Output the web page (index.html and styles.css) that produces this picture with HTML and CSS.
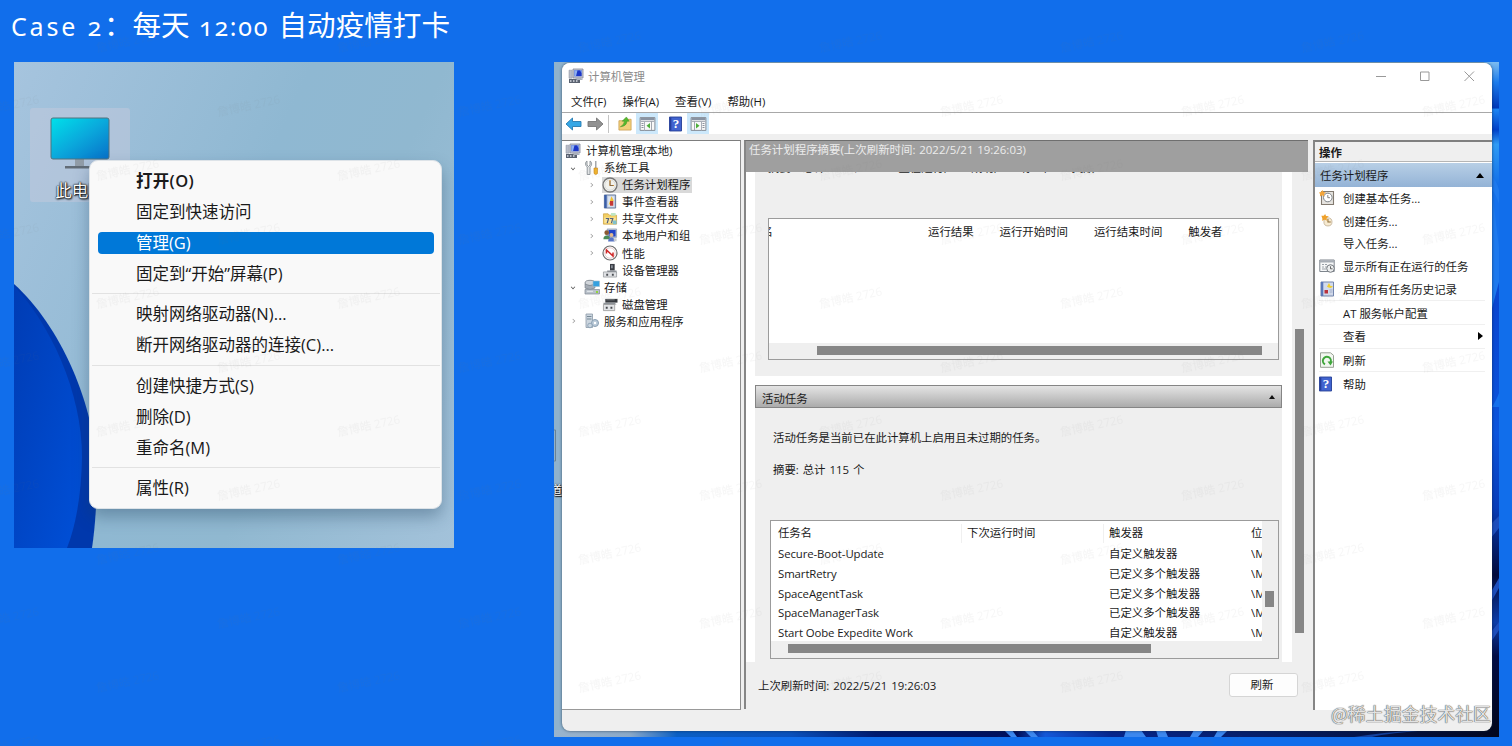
FILE: index.html
```html
<!DOCTYPE html>
<html lang="zh-CN">
<head>
    <meta charset="UTF-8">
    <title>Case 2</title>
    <link rel="stylesheet" href="styles.css">
</head>
<body>
    <!-- Icon definitions -->
    <svg class="defs" width="0" height="0">
        <defs>
            <linearGradient id="screen" x1="0" y1="0" x2="1" y2="1">
                <stop offset="0" stop-color="#00e1ea"/>
                <stop offset="0.5" stop-color="#0aa9dc"/>
                <stop offset="1" stop-color="#0870c8"/>
            </linearGradient>
            <linearGradient id="bloom" x1="0" y1="0" x2="1" y2="1">
                <stop offset="0" stop-color="#003cb4"/>
                <stop offset="1" stop-color="#0050d8"/>
            </linearGradient>
            <linearGradient id="bottomStrip">
                <stop offset="0" stop-color="#9ab4cd"/>
                <stop offset="0.08" stop-color="#8ba9c8"/>
                <stop offset="0.13" stop-color="#0b5fc4"/>
                <stop offset="0.25" stop-color="#0a50bb"/>
                <stop offset="0.34" stop-color="#001a70"/>
                <stop offset="0.49" stop-color="#000f5c"/>
                <stop offset="0.52" stop-color="#1458d8"/>
                <stop offset="0.59" stop-color="#06258c"/>
                <stop offset="0.75" stop-color="#061e68"/>
                <stop offset="1" stop-color="#02061f"/>
            </linearGradient>
            <linearGradient id="rightStrip" x1="0" y1="0" x2="0" y2="1">
                <stop offset="0" stop-color="#7dbcf0"/>
                <stop offset="0.03" stop-color="#1c7cec"/>
                <stop offset="0.068" stop-color="#0038b8"/>
                <stop offset="0.07" stop-color="#1c86f4"/>
                <stop offset="0.1" stop-color="#0040c8"/>
                <stop offset="0.122" stop-color="#2f9bf5"/>
                <stop offset="0.2" stop-color="#0a62e4"/>
                <stop offset="0.36" stop-color="#0a46d0"/>
                <stop offset="0.55" stop-color="#0b54dc"/>
                <stop offset="0.66" stop-color="#083cb8"/>
                <stop offset="0.76" stop-color="#020a3c"/>
                <stop offset="0.83" stop-color="#0d3da8"/>
                <stop offset="0.88" stop-color="#020c44"/>
                <stop offset="1" stop-color="#020618"/>
            </linearGradient>
        </defs>
        <symbol id="i-computer" viewBox="0 0 16 16">
            <path d="M5 1h10v9H5z" fill="#c9ccd6" stroke="#80859a" stroke-width=".8"/>
            <path d="M6.300 2.200h7.400v6H6.300z" fill="#1b36c8"/>
            <path d="M6.300 2.200h3.200l-1.500 6H6.300zM12 2.200h1.700v3z" fill="#8fb0f0"/>
            <path d="M1 2.200h3.200v8H1z" fill="#b9bdc9" stroke="#878c9b" stroke-width=".5"/>
            <path d="M1 11h11v4H1z" fill="#5a6270"/>
            <path d="M2 12.300h1.500v1.500H2zM5 12.300h1.500v1.500H5zM8 12.300h1.500v1.500H8z" fill="#d7dbe3"/>
            <path d="M7 10h6l2 2h-6z" fill="#aab0bd"/>
        </symbol>
        <symbol id="i-tools" viewBox="0 0 16 16">
            <path d="M3 1v4l1.500 1.500L6 5V1c2 1 2.300 4.500 0 6v7.500H3.200V7C1 5.500 1 2.200 3 1z" fill="#e2e4e6" stroke="#7e858c" stroke-width=".8"/>
            <path d="M11 1h1.500v7H11z" fill="#a4a7ab"/>
            <path d="M10 8h3.500v5.500q-1.700 2-3.500 0z" fill="#f2b52c" stroke="#c9851a" stroke-width=".6"/>
        </symbol>
        <symbol id="i-clock" viewBox="0 0 16 16">
            <circle cx="8" cy="8" r="7" fill="#f1f1ec" stroke="#777" stroke-width="1.300"/>
            <circle cx="8" cy="8" r="5.200" fill="none" stroke="#cfcfcf" stroke-width=".6"/>
            <path d="M8 3v5.500h4" fill="none" stroke="#d89035" stroke-width="1.200"/>
            <path d="M8 4v4.500h3" fill="none" stroke="#555" stroke-width=".6"/>
        </symbol>
        <symbol id="i-event" viewBox="0 0 16 16">
            <path d="M2 1h12v14H2z" fill="#b8c6de" stroke="#5d6f93" stroke-width=".9"/>
            <path d="M2 1h2.500v14H2z" fill="#3a5ea8"/>
            <path d="M6 2.500h6.500v11H6z" fill="#dde5f1"/>
            <path d="M6.500 12l3-9.500L12 7z" fill="#f0bf31"/>
            <path d="M8 7.500h3.500v5H8z" fill="#c53a36"/>
        </symbol>
        <symbol id="i-share" viewBox="0 0 16 16">
            <path d="M1 3h5l1.500 1.500H15V14H1z" fill="#f3cf63" stroke="#c79a35" stroke-width=".7"/>
            <path d="M9 2h5v3H9z" fill="#bfe6c5"/>
            <path d="M2 7h12v6H2z" fill="#f9e39a"/>
            <path d="M3.500 8h3l-1.500 5M8 8h3l-1.500 5" fill="none" stroke="#55617a" stroke-width="1.300"/>
            <path d="M11 10h4v4h-4z" fill="#7fc1ce"/>
        </symbol>
        <symbol id="i-users" viewBox="0 0 16 16">
            <path d="M5 1h10v9H5z" fill="#b9c6dd" stroke="#8692a8" stroke-width=".7"/>
            <path d="M6.500 2h7.500v7H6.500z" fill="#2345c7"/>
            <circle cx="4.500" cy="5" r="2.500" fill="#8b5a33"/>
            <path d="M1 12q0-4 3.500-4T8 12z" fill="#4a8c58"/>
            <circle cx="9.500" cy="7.500" r="2.200" fill="#e3ba8e"/>
            <path d="M6 14.500q0-4.500 3.500-4.500t3.500 4.500z" fill="#5975c4"/>
            <path d="M12 11h3v3h-3z" fill="#c8ccd2"/>
        </symbol>
        <symbol id="i-perf" viewBox="0 0 16 16">
            <circle cx="8" cy="8" r="7" fill="#fff" stroke="#6e6e6e" stroke-width="1.200"/>
            <circle cx="8" cy="8" r="5.200" fill="#fff" stroke="#d5a0a0" stroke-width=".5"/>
            <path d="M4.500 8.500V5l6.500 6V7.500" fill="none" stroke="#d02828" stroke-width="1.500"/>
        </symbol>
        <symbol id="i-device" viewBox="0 0 16 16">
            <path d="M8 1h5v7H8z" fill="#3b3f46"/>
            <path d="M9.300 2.500h1.500v3H9.300z" fill="#9aa2ac"/>
            <path d="M5 8h10v3H5z" fill="#8c9198"/>
            <path d="M1 9.500h14V15H1z" fill="#dfe1e4" stroke="#8a8d91" stroke-width=".7"/>
            <path d="M4 11.500h2v2H4zM10 11.500h2v2h-2z" fill="#4b4e53"/>
        </symbol>
        <symbol id="i-storage" viewBox="0 0 16 16">
            <ellipse cx="6" cy="4" rx="5" ry="2.700" fill="#d2d6db" stroke="#767d86" stroke-width=".8"/>
            <path d="M1 5v4q5 3 10 0V5q-5 3-10 0z" fill="#a5acb5" stroke="#767d86" stroke-width=".6"/>
            <path d="M9 2h6.500v5.500H9z" fill="#35a0df" stroke="#9dbacb" stroke-width=".6"/>
            <path d="M1 10.500h14.500V15H1z" fill="#b9c1ca" stroke="#7f8893" stroke-width=".7"/>
            <path d="M3 12.300h6" stroke="#e7ebef"/>
            <path d="M12 12h2v2h-2z" fill="#8fd43d"/>
        </symbol>
        <symbol id="i-disk" viewBox="0 0 16 16">
            <path d="M3 2h13v4H3z" fill="#35383d"/>
            <path d="M4 3h9" stroke="#90959b" stroke-width=".8"/>
            <path d="M1 6h12l2 2H1z" fill="#8e9399"/>
            <path d="M1 8h12v6.500H1z" fill="#e2e4e7" stroke="#888" stroke-width=".7"/>
            <path d="M3.500 10.500h2v2h-2zM8.500 10.500h2v2h-2z" fill="#44474c"/>
        </symbol>
        <symbol id="i-services" viewBox="0 0 16 16">
            <path d="M2 1h6.500v13.500H2z" fill="#ccd6df" stroke="#8d9ba7" stroke-width=".8"/>
            <path d="M3 3.500h4.500M3 6h4.500" stroke="#778996" stroke-width="1"/>
            <circle cx="11" cy="10" r="3.500" fill="#b9c9d8" stroke="#8ba0b3" stroke-width="1"/>
            <circle cx="11" cy="10" r="1.200" fill="#fff"/>
            <circle cx="6" cy="12.500" r="2.300" fill="#c8d4df" stroke="#8ba0b3" stroke-width=".9"/>
        </symbol>
        <symbol id="i-back" viewBox="0 0 16 16">
            <path d="M.5 8L7 2v3.500h8.500v5H7V14z" fill="#35a7e6" stroke="#277bb0" stroke-width=".9"/>
        </symbol>
        <symbol id="i-forward" viewBox="0 0 16 16">
            <path d="M15.500 8L9 2v3.500H.5v5H9V14z" fill="#919191" stroke="#777" stroke-width=".9"/>
        </symbol>
        <symbol id="i-up" viewBox="0 0 16 16">
            <path d="M1.500 5h5l1-1.500h7V15h-13z" fill="#f2d17c" stroke="#c99b4a" stroke-width=".8"/>
            <path d="M3 11.500Q7 9.500 7.500 5.500L5 5.500 9.500 1l3 4.500-2.300 0Q9.500 11 3 11.500z" fill="#54b92e" stroke="#3d8f22" stroke-width=".5"/>
        </symbol>
        <symbol id="i-pane-left" viewBox="0 0 16 14">
            <path d="M.6.6h14.800v12.800H.6z" fill="#f8f8f8" stroke="#868d97" stroke-width="1"/>
            <path d="M1 1h14v2.200H1z" fill="#8993a2"/>
            <path d="M1 4.500h14M5 4.500v9" stroke="#a9afb8"/>
            <path d="M2 6.500h2M2 8.500h2M2 10.500h2" stroke="#8a919c"/>
            <path d="M10.500 6v5.500L7 8.800z" fill="#4dae39"/>
            <path d="M12 4.500v9" stroke="#8b929c" stroke-width=".8"/>
        </symbol>
        <symbol id="i-pane-right" viewBox="0 0 16 14">
            <path d="M.6.6h14.800v12.800H.6z" fill="#f8f8f8" stroke="#868d97" stroke-width="1"/>
            <path d="M1 1h14v2.200H1z" fill="#8993a2"/>
            <path d="M1 4.500h14M11 4.500v9" stroke="#a9afb8"/>
            <path d="M12 6.500h2M12 8.500h2M12 10.500h2" stroke="#8a919c"/>
            <path d="M5.500 6v5.500L9 8.800z" fill="#4dae39"/>
            <path d="M4 4.500v9" stroke="#8b929c" stroke-width=".8"/>
        </symbol>
        <symbol id="i-book" viewBox="0 0 14 16">
            <path d="M.5.500h13v15H.500z" fill="#4163cf" stroke="#253f96"/>
            <path d="M1 1h1.500v14H1z" fill="#243d9c"/>
        </symbol>
        <symbol id="i-task-basic" viewBox="0 0 16 16">
            <path d="M2.500 1.500h12v13h-12z" fill="#e5e3df" stroke="#827a70" stroke-width="1.100"/>
            <circle cx="8.800" cy="7.500" r="4.300" fill="#fff" stroke="#7e8388"/>
            <path d="M8.800 5v2.700h2.200" fill="none" stroke="#777" stroke-width=".9"/>
            <path d="M0 2.500l2-.5L3.500 0 4.500 2 7 2.500 5 4l.3 2.500L3 5.300 1 6.500V4z" fill="#f3a53a"/>
        </symbol>
        <symbol id="i-task" viewBox="0 0 16 16">
            <circle cx="9" cy="9.500" r="4.300" fill="#f7ead0" stroke="#c7b89f"/>
            <path d="M9 6.500v3.200h3" fill="none" stroke="#8b6b35" stroke-width="1.100"/>
            <path d="M2 3l2.500 0L6 1l1 2.200L10 3.500 7.500 5.500l.4 2.700-2.400-1.200L3 8.500V5.500z" fill="#efa12b"/>
        </symbol>
        <symbol id="i-running" viewBox="0 0 16 16">
            <path d="M.8 2h14.400v11.500H.8z" fill="#f6f7f8" stroke="#7e858d"/>
            <path d="M1 2.300h14v2.200H1z" fill="#a7adb5"/>
            <path d="M3 6.500h2M3 9h2M6 6.500h2M6 9h2M3 11h4" stroke="#9aa1a8"/>
            <circle cx="11.500" cy="10.500" r="3.800" fill="#eceeef" stroke="#74797f"/>
            <path d="M11.500 8.300v2.500h2" fill="none" stroke="#555" stroke-width=".9"/>
        </symbol>
        <symbol id="i-history" viewBox="0 0 16 16">
            <path d="M2 1h12.500v14H2z" fill="#d3dbed" stroke="#7285ad"/>
            <path d="M2 1h2.300v14H2z" fill="#5b78ba"/>
            <path d="M10 2l1.500 3H14l-2 2-2.500-.5-1.500-.8z" fill="#f1ce2e"/>
            <path d="M5.500 9h3.500v3.500H5.500z" fill="#b9323c"/>
            <path d="M10.500 9h3M10.500 11h3" stroke="#9fabc6"/>
        </symbol>
        <symbol id="i-refresh" viewBox="0 0 16 16">
            <path d="M1.500.8h10l3 2.500v12h-13z" fill="#f2f7f0" stroke="#98a094"/>
            <path d="M6 12.300A4 4 0 1 1 11.500 10.500" fill="none" stroke="#3fa63b" stroke-width="2"/>
            <path d="M8.500 9.500h5.500L11.500 13.500z" fill="#3fa63b"/>
        </symbol>
    </svg>

    <h1 class="title"><span class="latin">Case 2</span>：每天 <span class="latin time">12:00</span> 自动疫情打卡</h1>

    <main class="shots">
        <section class="desktop">
            <svg class="wallpaper" width="440" height="486">
                <path d="M0 222C45 262 84 345 83 420Q82 460 78 486H0z" fill="#0038ac"/>
                <path d="M0 224C36 262 68 330 68 395Q67 450 53 486H0z" fill="url(#bloom)"/>
            </svg>
            <div class="pc-icon">
                <svg width="60" height="54" viewBox="0 0 60 54">
                    <path d="M25 42h9v8h-9z" fill="#929da8"/>
                    <path d="M15 49h30v2.500H15z" fill="#626c76"/>
                    <rect x="1" y="1" width="58" height="41" rx="2" fill="url(#screen)" stroke="#50737f"/>
                </svg>
                <span>此电脑</span>
            </div>
            <ul class="context-menu">
                <li class="default">打开(O)</li>
                <li>固定到快速访问</li>
                <li class="active">管理(G)</li>
                <li>固定到“开始”屏幕(P)</li>
                <li class="sep"></li>
                <li>映射网络驱动器(N)...</li>
                <li>断开网络驱动器的连接(C)...</li>
                <li class="sep"></li>
                <li>创建快捷方式(S)</li>
                <li>删除(D)</li>
                <li>重命名(M)</li>
                <li class="sep"></li>
                <li>属性(R)</li>
            </ul>
        </section>

        <section class="desktop-2">
            <svg class="wallpaper" width="945" height="675">
                <path d="M930 0h15v675h-15z" fill="url(#rightStrip)"/>
                <path d="M937 112Q944 122 945 128V220L937 250z" fill="#1d79ee"/>
                <path d="M945 185v-43q-3-10-7-14zM945 345h-7q5-8 7-14z" fill="#1470ec"/>
                <path d="M937 462l8-8v12l-8 10zM937 530l8-14v10l-8 14zM937 570l8-10v8l-8 12z" fill="#1e4ebc"/>
                <path d="M0 668h945v7H0z" fill="url(#bottomStrip)"/>
                <path d="M263 668h5l5 7h-5zM282 668h5l7 7h-7zM492 668h13l4 7h-20zM514 668h7l3 7h-8zM560 668h8l-5 7h-7zM582 668h8l-6 7h-6z" transform="translate(-58)" fill="#3c87ee" opacity="0"/>
                <path d="M450 668h8l5 7h-6zM470 668h8l6 7h-7zM572 668h15l5 7h-22zM602 668h9l3 7h-10zM640 668h10l-6 7h-8zM664 668h10l-7 7h-7z" fill="#3c87ee"/>
                <path d="M800 675q30-5 70-7h8q-45 3-60 7z" fill="#14409c"/>
                <path d="M-1 368h2.500v31H-1" fill="none" stroke="#6a8294"/>
            </svg>
            <span class="clipped-label">道</span>

            <div class="window">
                <header class="title-bar">
                    <svg width="16" height="16"><use href="#i-computer"/></svg>
                    <span>计算机管理</span>
                    <svg class="controls" width="102" height="12" viewBox="0 0 102 12">
                        <path d="M1 6.500h10M45.500 2h8.500v8.500h-8.500zM89.500 1.500l9.500 9.500M99 1.500l-9.500 9.500" fill="none" stroke="#999"/>
                    </svg>
                </header>
                <nav class="menu-bar">
                    <span>文件(F)</span><span>操作(A)</span><span>查看(V)</span><span>帮助(H)</span>
                </nav>
                <div class="toolbar">
                    <svg width="17" height="16"><use href="#i-back"/></svg>
                    <svg width="17" height="16"><use href="#i-forward"/></svg>
                    <i class="divider"></i>
                    <svg width="16" height="15"><use href="#i-up"/></svg>
                    <span class="pressed"><svg width="17" height="14"><use href="#i-pane-left"/></svg></span>
                    <span class="book"><svg width="13" height="16"><use href="#i-book"/></svg><b>?</b></span>
                    <span class="pressed last"><svg width="17" height="14"><use href="#i-pane-right"/></svg></span>
                </div>

                <div class="panes">
                    <ul class="tree">
                        <li class="l0"><svg width="16" height="16"><use href="#i-computer"/></svg><span>计算机管理(本地)</span></li>
                        <li class="l1"><i class="open"></i><svg width="16" height="16"><use href="#i-tools"/></svg><span>系统工具</span></li>
                        <li class="l2 selected"><i></i><p><svg width="16" height="16"><use href="#i-clock"/></svg><span>任务计划程序</span></p></li>
                        <li class="l2"><i></i><p><svg width="16" height="15"><use href="#i-event"/></svg><span>事件查看器</span></p></li>
                        <li class="l2"><i></i><p><svg width="16" height="15"><use href="#i-share"/></svg><span>共享文件夹</span></p></li>
                        <li class="l2"><i></i><p><svg width="16" height="15"><use href="#i-users"/></svg><span>本地用户和组</span></p></li>
                        <li class="l2"><i></i><p><svg width="16" height="16"><use href="#i-perf"/></svg><span>性能</span></p></li>
                        <li class="l2"><i class="none"></i><p><svg width="16" height="15"><use href="#i-device"/></svg><span>设备管理器</span></p></li>
                        <li class="l1"><i class="open"></i><svg width="16" height="16"><use href="#i-storage"/></svg><span>存储</span></li>
                        <li class="l2"><i class="none"></i><p><svg width="16" height="15"><use href="#i-disk"/></svg><span>磁盘管理</span></p></li>
                        <li class="l1"><i></i><svg width="16" height="16"><use href="#i-services"/></svg><span>服务和应用程序</span></li>
                    </ul>

                    <div class="summary">
                        <h2>任务计划程序摘要(上次刷新时间: 2022/5/21 19:26:03)</h2>
                        <div class="scroll-area">
                            <div class="groups">
                                <div class="group status">
                                    <div class="cut-line">摘要: 总计 0 个 - 0 正在运行, 0 成功, 0 停止, 0 失败</div>
                                    <div class="list list-run">
                                        <div class="row head">
                                            <span class="cut-name">名</span><span>运行结果</span><span>运行开始时间</span><span>运行结束时间</span><span>触发者</span>
                                        </div>
                                        <div class="hscroll"><i></i></div>
                                    </div>
                                </div>
                                <h3>活动任务<i></i></h3>
                                <div class="group tasks">
                                    <p>活动任务是当前已在此计算机上启用且未过期的任务。</p>
                                    <p>摘要: 总计 115 个</p>
                                    <div class="list list-tasks">
                                        <div class="rows">
                                            <div class="row head"><span>任务名</span><span>下次运行时间</span><span>触发器</span><span>位置</span></div>
                                            <div class="row"><span>Secure-Boot-Update</span><span></span><span>自定义触发器</span><span>\Microsoft</span></div>
                                            <div class="row"><span>SmartRetry</span><span></span><span>已定义多个触发器</span><span>\Microsoft</span></div>
                                            <div class="row"><span>SpaceAgentTask</span><span></span><span>已定义多个触发器</span><span>\Microsoft</span></div>
                                            <div class="row"><span>SpaceManagerTask</span><span></span><span>已定义多个触发器</span><span>\Microsoft</span></div>
                                            <div class="row"><span>Start Oobe Expedite Work</span><span></span><span>自定义触发器</span><span>\Microsoft</span></div>
                                        </div>
                                        <div class="vscroll"><i></i></div>
                                        <div class="hscroll"><i></i></div>
                                    </div>
                                </div>
                            </div>
                            <div class="main-scroll"><i></i></div>
                        </div>
                        <footer>
                            <span>上次刷新时间: 2022/5/21 19:26:03</span>
                            <button>刷新</button>
                        </footer>
                    </div>

                    <aside class="actions">
                        <h2>操作</h2>
                        <h3>任务计划程序<i></i></h3>
                        <ul>
                            <li><svg width="16" height="16"><use href="#i-task-basic"/></svg>创建基本任务...</li>
                            <li><svg width="15" height="15"><use href="#i-task"/></svg>创建任务...</li>
                            <li><svg width="16" height="16"></svg>导入任务...</li>
                            <li><svg width="16" height="16"><use href="#i-running"/></svg>显示所有正在运行的任务</li>
                            <li><svg width="16" height="16"><use href="#i-history"/></svg>启用所有任务历史记录</li>
                            <li class="line"><svg width="16" height="16"></svg>AT 服务帐户配置</li>
                            <li class="line"><svg width="16" height="16"></svg>查看<i class="more"></i></li>
                            <li class="line"><svg width="16" height="16"><use href="#i-refresh"/></svg>刷新</li>
                            <li class="line"><span class="book"><svg width="13" height="16"><use href="#i-book"/></svg><b>?</b></span>帮助</li>
                        </ul>
                    </aside>
                </div>
                <div class="status-bar"></div>
            </div>
        </section>
    </main>

    <!-- repeated user mark over the whole slide -->
    <svg class="mark" width="1512" height="746">
        <defs>
            <pattern id="tile" width="241" height="128" patternUnits="userSpaceOnUse" x="6" y="102">
                <g font-size="11.500" font-weight="500" fill="#777">
                    <text x="89" y="72" transform="rotate(-12 120 64)">詹博皓 2726</text>
                    <text x="-31" y="8" transform="rotate(-12)">詹博皓 2726</text>
                    <text x="210" y="8" transform="rotate(-12 241 0)">詹博皓 2726</text>
                    <text x="-31" y="136" transform="rotate(-12 0 128)">詹博皓 2726</text>
                    <text x="210" y="136" transform="rotate(-12 241 128)">詹博皓 2726</text>
                </g>
            </pattern>
        </defs>
        <rect width="1512" height="746" fill="url(#tile)"/>
    </svg>
    <div class="credit">@稀土掘金技术社区</div>
</body>
</html>
```

FILE: styles.css
```css
* {
    box-sizing: border-box;
    margin: 0;
    padding: 0;
}
body {
    width: 1512px;
    height: 746px;
    overflow: hidden;
    position: relative;
    background: #116eeb;
    font-family: "Open Sans", "Noto Sans CJK SC", sans-serif;
    font-size: 11.4px;
    color: #1a1a1a;
}
ul {
    list-style: none;
}
svg {
    display: block;
    flex: none;
}
.defs {
    position: absolute;
}
.title {
    height: 62px;
    padding-left: 11px;
    font-size: 28.6px;
    line-height: 49px;
    font-weight: 400;
    font-family: "Noto Sans", "Noto Sans CJK SC", sans-serif;
    color: #fff;
    white-space: pre;
}
.title .latin {
    font-size: 25px;
    letter-spacing: 2.8px;
    font-feature-settings: "onum";
}
.title .time {
    letter-spacing: 1.7px;
    margin: 0 2px 0 2px;
}
.shots {
    display: flex;
    align-items: flex-start;
    gap: 100px;
    padding-left: 14px;
}

/* left: desktop with context menu */
.desktop {
    position: relative;
    width: 440px;
    height: 486px;
    overflow: hidden;
    background: linear-gradient(115deg, #a6c4de 0%, #8fb8d2 45%, #90b8d0 65%, #a3c2da 100%);
}
.wallpaper {
    position: absolute;
    left: 0;
    top: 0;
}
.pc-icon {
    position: absolute;
    left: 16px;
    top: 46px;
    width: 100px;
    height: 94px;
    padding-top: 9px;
    border-radius: 3px;
    background: rgba(190, 200, 220, 0.6);
    display: flex;
    flex-direction: column;
    align-items: center;
}
.pc-icon span {
    margin-top: 8px;
    font-size: 16.5px;
    line-height: 24px;
    color: #fff;
    text-shadow: 0 0 2px #000, 1px 1px 2px #000, 0 0 1px #000;
}
.context-menu {
    position: absolute;
    left: 75px;
    top: 98px;
    width: 353px;
    height: 349px;
    padding: 6px 7px 0 8px;
    background: #f9f9f9;
    border: 1px solid #dde3e8;
    border-radius: 9px;
    box-shadow: 0 8px 16px rgba(30, 60, 90, 0.35);
    font-size: 16.5px;
}
.context-menu li {
    height: 30.9px;
    line-height: 28px;
    padding-left: 38px;
}
.context-menu .default {
    font-weight: 600;
    letter-spacing: 0.3px;
}
.context-menu .active {
    height: 22px;
    margin: 3.4px 0 5.5px;
    line-height: 22px;
    border-radius: 4px;
    background: #0078d8;
    color: #fff;
}
.context-menu .sep {
    height: 1px;
    margin: 2.5px -6px 6.200px;
    background: #e2e2e2;
}

/* right: computer management */
.desktop-2 {
    position: relative;
    width: 945px;
    height: 675px;
    padding: 1px 0 0 8px;
    overflow: hidden;
    background: #8fb2cc;
}
.clipped-label {
    position: absolute;
    left: -4px;
    top: 419px;
    font-size: 12px;
    color: #fff;
    text-shadow: 0 0 2px #000, 1px 1px 1px #000;
}
.window {
    position: relative;
    width: 930px;
    height: 668px;
    display: flex;
    flex-direction: column;
    overflow: hidden;
    border-radius: 8px;
    background: #efefef;
    box-shadow: 0 0 3px rgba(20, 40, 60, 0.7);
}
.title-bar {
    display: flex;
    align-items: center;
    height: 27px;
    padding: 0 15px 2px 6px;
    gap: 4px;
    background: #fff;
    color: #8b8b8b;
}
.controls {
    margin-left: auto;
}
.menu-bar {
    display: flex;
    gap: 16px;
    height: 23px;
    padding-left: 9px;
    line-height: 23px;
    background: #fff;
    border-bottom: 1px solid #a8a8a8;
}
.toolbar {
    display: flex;
    align-items: center;
    height: 21px;
    padding-left: 3px;
    background: #fff;
}
.toolbar > svg + svg {
    margin-left: 5px;
}
.divider {
    width: 1px;
    height: 18px;
    margin: 0 8px 0 4px;
    background: #c4c4c4;
}
.pressed {
    display: flex;
    align-items: center;
    justify-content: center;
    width: 22px;
    height: 21px;
    margin: 0 11px 0 3px;
    background: #cce8fb;
}
.pressed.last {
    margin: 0 0 0 5px;
}
.book {
    position: relative;
    width: 13px;
    height: 16px;
    flex: none;
}
.book b {
    position: absolute;
    left: 1px;
    right: 0;
    top: 0;
    text-align: center;
    font: bold 13px/16px "Liberation Serif", serif;
    color: #fff;
}
.panes {
    display: flex;
    height: 570px;
    margin-top: 6px;
}
.tree {
    width: 179px;
    height: 570px;
    padding: 1px 0 0 3px;
    background: #fff;
    border-top: 1px solid #7d7d7d;
    border-right: 1px solid #8c8c8c;
    border-bottom: 1px solid #999;
}
.tree li {
    display: flex;
    align-items: center;
    height: 17.080px;
    line-height: 17px;
    white-space: nowrap;
}
.tree li > svg + span {
    margin-left: 5px;
}
.tree .l1 {
    padding-left: 6px;
}
.tree .l1 > svg {
    margin-left: -1px;
}
.tree .l1 > svg + span {
    margin-left: 4px;
}
.tree .l2 {
    padding-left: 24px;
}
.tree i {
    width: 4px;
    height: 4px;
    margin: 0 10px 0 0;
    border: solid #a0a0a0;
    border-width: 1px 1px 0 0;
    transform: rotate(45deg) scale(0.8);
}
.tree i.open {
    border-color: #555;
    transform: rotate(135deg) scale(0.8);
}
.tree i.none {
    visibility: hidden;
}
.tree p {
    display: flex;
    align-items: center;
    height: 16px;
    gap: 4px;
    margin-left: -1px;
    padding: 0 2px 0 0;
}
.tree .selected p {
    background: #d9d9d9;
}

.summary {
    display: flex;
    flex-direction: column;
    width: 564px;
    height: 569px;
    margin-left: 3px;
    border-left: 2px solid #868686;
    border-top: 1px solid #6f6f6f;
}
.summary h2 {
    height: 31px;
    padding-left: 3px;
    background: #9f9f9f;
    color: #ececec;
    font-size: 11.45px;
    font-weight: normal;
    line-height: 18px;
    word-spacing: 0.8px;
}
.scroll-area {
    display: flex;
    height: 490px;
}
.groups {
    width: 546px;
    padding: 0 10px 0 9px;
    background: #fff;
}
.group {
    background: #efefef;
}
.status {
    height: 204px;
    padding: 0 3px 0 13px;
    overflow: hidden;
}
.cut-line {
    height: 47px;
    line-height: 16px;
    margin-top: -12px;
    margin-bottom: 11px;
    white-space: pre;
    word-spacing: 6px;
}
.list {
    border: 1px solid #9b9b9b;
    background: #fff;
    overflow: hidden;
}
.list-run {
    display: flex;
    flex-direction: column;
    height: 142px;
}
.list-run .row {
    display: flex;
    line-height: 25px;
    height: 124px;
}
.list-run .row span {
    height: 20px;
    margin-right: 19px;
    padding-right: 7px;
}
.list-run .row .cut-name {
    width: 4px;
    margin-right: 155px;
    padding: 0;
    overflow: hidden;
    direction: rtl;
}
.hscroll {
    height: 16px;
    padding: 3px 0 0 48px;
    background: #efefef;
}
.hscroll i {
    display: block;
    width: 445px;
    height: 9px;
    background: #868686;
}
.groups h3 {
    display: flex;
    align-items: center;
    justify-content: space-between;
    height: 23px;
    margin-top: 9px;
    padding: 3px 6px 0 6px;
    border: 1px solid #858585;
    background: linear-gradient(#e4e4e4, #ababab);
    font-size: 11.4px;
    font-weight: normal;
}
.groups h3 i {
    border: solid transparent;
    border-width: 0 3px 4px;
    border-bottom-color: #111;
    margin-bottom: 3px;
}
.tasks {
    height: 254px;
    padding: 19px 3px 0 15px;
}
.tasks p {
    height: 32px;
    padding-left: 3px;
    line-height: 22px;
    word-spacing: 1px;
}
.list-tasks {
    display: grid;
    grid-template-columns: 491px 16px;
    grid-template-rows: 120px 17px;
    height: 139px;
    margin-top: 29px;
    width: 509px;
}
.list-tasks .row {
    display: grid;
    grid-template-columns: 189px 142px 142px 11px;
    padding-left: 7px;
    height: 19.8px;
    line-height: 19px;
    white-space: nowrap;
}
.list-tasks .row span:first-child {
    letter-spacing: -0.1px;
}
.list-tasks .row span:last-child {
    overflow: hidden;
}
.list-tasks .head {
    height: 23px;
    line-height: 24px;
}
.rows {
    overflow: hidden;
}
.list-tasks .head span + span::before {
    content: "";
    float: left;
    width: 1px;
    height: 19px;
    margin: 3px 0 0 -6px;
    background: #f0f0f0;
}
.vscroll {
    padding: 70px 4px 0 3px;
    background: #efefef;
}
.vscroll i {
    display: block;
    height: 16px;
    background: #868686;
}
.list-tasks .hscroll {
    grid-column: 1 / 3;
    height: 17px;
    padding: 3px 0 0 17px;
}
.list-tasks .hscroll i {
    width: 363px;
}
.main-scroll {
    width: 16px;
    padding: 157px 4px 0 3px;
}
.main-scroll i {
    display: block;
    height: 304px;
    background: #868686;
}
.summary footer {
    display: flex;
    justify-content: space-between;
    align-items: center;
    height: 47px;
    padding: 0 10px 2px 12px;
    word-spacing: 1px;
}
.summary button {
    width: 69px;
    height: 24px;
    padding: 0 3px 1px 0;
    background: #fdfdfd;
    border: 1px solid #d5d5d5;
    border-radius: 3px;
    font: inherit;
    color: inherit;
}

.actions {
    width: 179px;
    height: 570px;
    margin-left: 5px;
    border-left: 2px solid #868686;
    border-top: 2px solid #7f7f7f;
    background: #fff;
}
.actions h2 {
    height: 20px;
    padding-left: 4px;
    line-height: 22px;
    font-size: 11.4px;
    font-weight: 700;
    background: #efefef;
    border-bottom: 1px solid #b5b5b5;
}
.actions h3 {
    display: flex;
    align-items: center;
    justify-content: space-between;
    height: 24px;
    margin-top: 1px;
    padding: 0 8px 0 5px;
    background: linear-gradient(#b8cfe6, #94b3d6);
    font-size: 11.4px;
    font-weight: normal;
}
.actions h3 i {
    border: solid transparent;
    border-width: 0 4.5px 5px;
    border-bottom-color: #000;
}
.actions ul {
    margin-top: -0.6px;
}
.actions li {
    display: flex;
    align-items: center;
    height: 22.800px;
    margin: 0 7px 0 4px;
    gap: 8px;
    white-space: nowrap;
}
.actions li svg {
    width: 16px;
}
.actions li .book {
    width: 16px;
}
.actions li .book b {
    right: 3px;
}
.actions .book svg {
    width: 13px;
}
.actions li.line {
    height: 23.700px;
    border-top: 1px solid #f0f0f0;
}
.more {
    margin: 0 2px 0 auto;
    border: solid transparent;
    border-width: 4.5px 0 4.5px 5px;
    border-left-color: #000;
}
.status-bar {
    height: 21px;
}

.mark {
    position: absolute;
    left: 0;
    top: 0;
    opacity: 0.055;
    pointer-events: none;
}
.credit {
    position: absolute;
    right: 21px;
    bottom: 20px;
    font-family: "Noto Sans CJK SC", sans-serif;
    font-size: 17.9px;
    line-height: 26px;
    color: #e2e2e2;
    text-shadow: 0 0 1px #444, 0 0 1px #555;
}
```
